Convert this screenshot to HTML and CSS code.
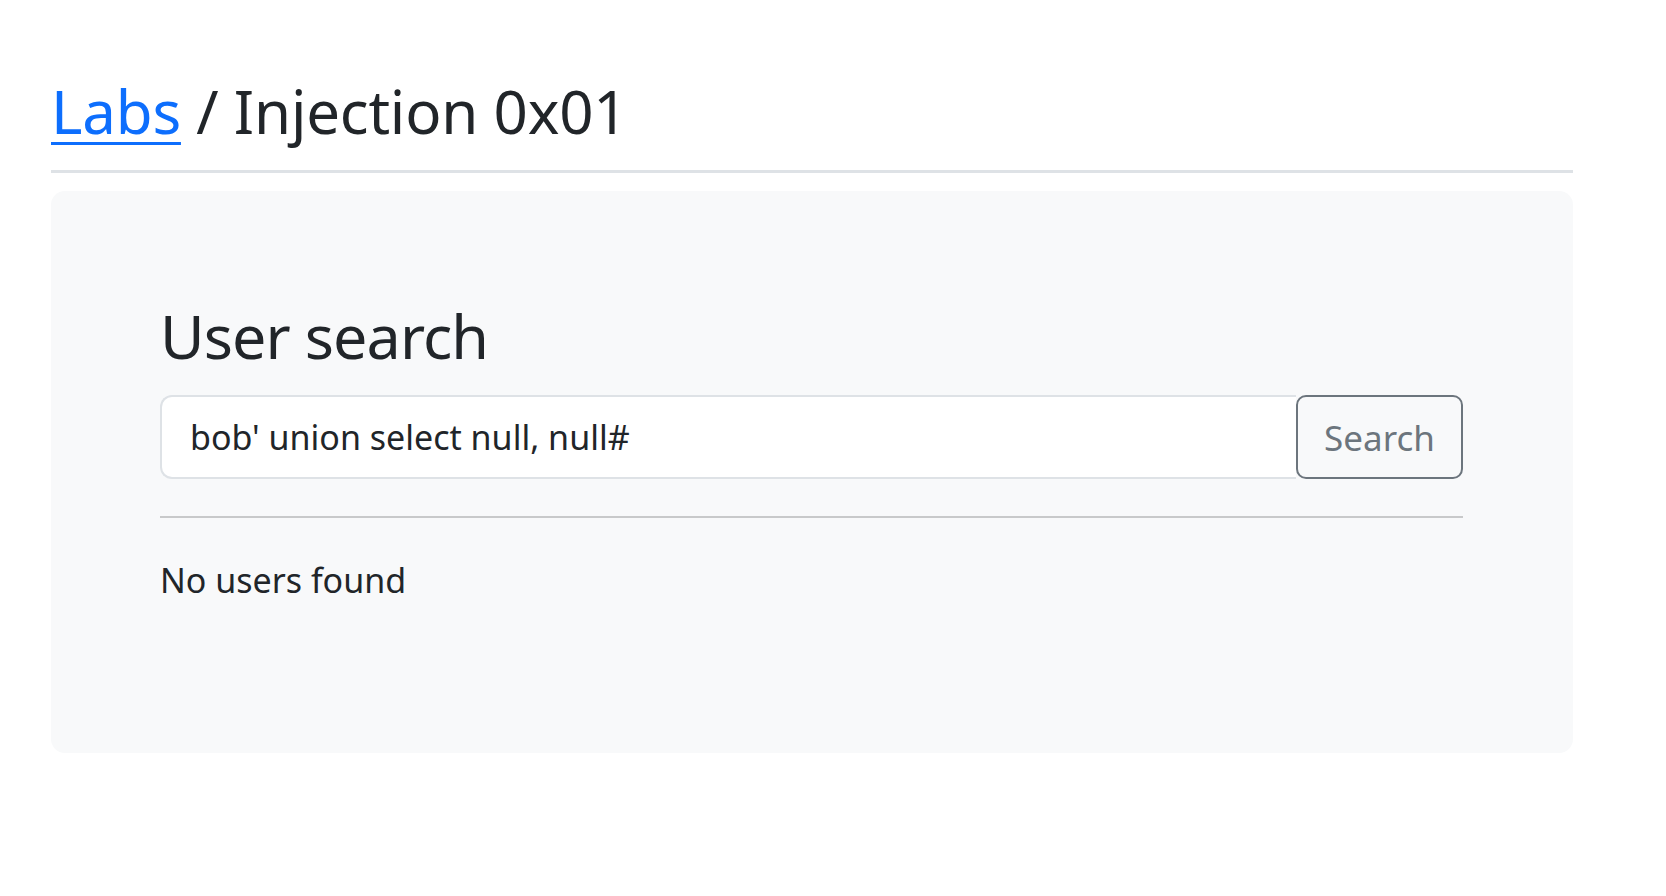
FILE: index.html
```html
<!DOCTYPE html>
<html lang="en">
<head>
<meta charset="utf-8">
<title>Injection 0x01</title>
<link rel="stylesheet" href="styles.css">
</head>
<body>
<div class="container">
  <header class="page-header">
    <h1 class="title"><a href="#" class="crumb">Labs</a> / Injection 0x01</h1>
  </header>
  <main class="card">
    <h2 class="card-title">User search</h2>
    <form class="search-group">
      <input class="search-input" type="text" value="bob' union select null, null#">
      <button class="search-btn" type="button">Search</button>
    </form>
    <hr class="divider">
    <p class="result">No users found</p>
  </main>
</div>
</body>
</html>
```
FILE: styles.css
```css
html, body {
  margin: 0;
  padding: 0;
  background: #ffffff;
}
body {
  font-family: "Noto Sans", "Open Sans", sans-serif;
  color: #212529;
}
.container {
  margin-left: 51px;
  width: 1522px;
}
.page-header {
  padding-top: 75px;
  padding-bottom: 23px;
  border-bottom: 3px solid #dee2e6;
}
.title {
  margin: 0;
  font-size: 60px;
  font-weight: 400;
  line-height: 72px;
  letter-spacing: -0.2px;
}
.crumb {
  color: #0d6efd;
  text-decoration: underline;
  text-decoration-thickness: 3px;
  text-underline-offset: 8px;
}
.card {
  display: block;
  margin-top: 18px;
  background: #f8f9fa;
  border-radius: 14px;
  padding: 106px 110px 147px 109px;
}
.card-title {
  margin: 0 0 21px 0;
  font-size: 61px;
  font-weight: 400;
  line-height: 77px;
  letter-spacing: -0.9px;
}
.search-group {
  display: flex;
  margin: 0;
}
.search-input {
  flex: 1;
  min-width: 0;
  height: 84px;
  box-sizing: border-box;
  border: 2px solid #dee2e6;
  border-right: none;
  border-radius: 12px 0 0 12px;
  background: #ffffff;
  padding: 0 28px;
  font-family: inherit;
  font-size: 34px;
  color: #212529;
  outline: none;
}
.search-btn {
  height: 84px;
  width: 167px;
  box-sizing: border-box;
  border: 2px solid #6c757d;
  border-radius: 10px;
  background: transparent;
  color: #6c757d;
  font-family: inherit;
  font-size: 35px;
  padding: 0;
}
.divider {
  margin: 37px 0 0 0;
  border: 0;
  border-top: 2px solid #c8c9ca;
  height: 0;
}
.result {
  margin: 36px 0 0 0;
  font-size: 34px;
  line-height: 52px;
}
```
